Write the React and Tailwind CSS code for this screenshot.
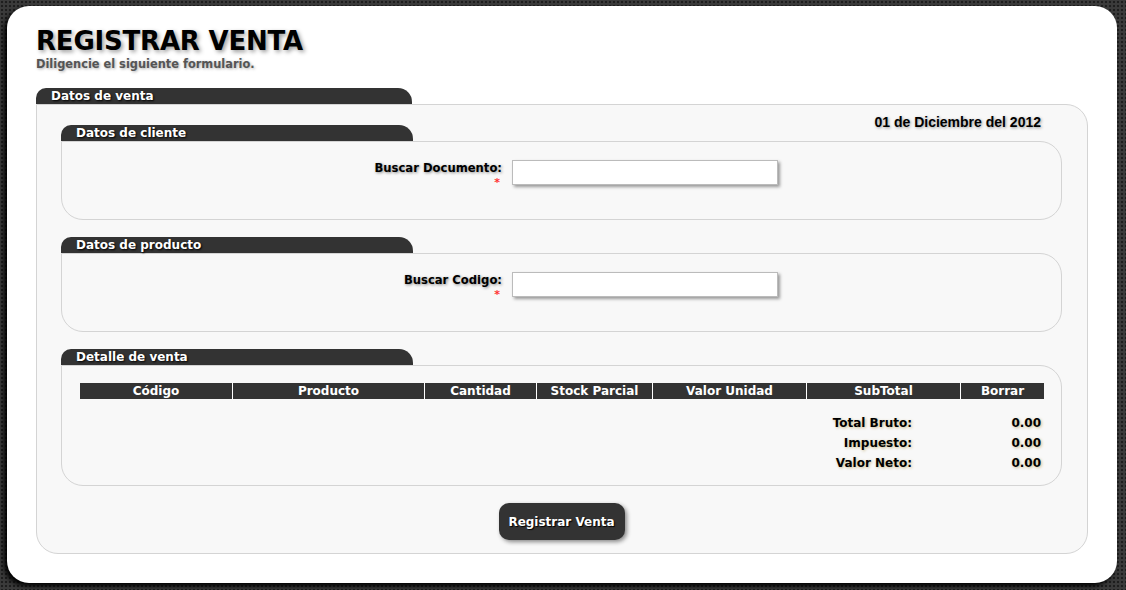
import React from 'react';

const font = { fontFamily: '"DejaVu Sans", Verdana, sans-serif' };

// Dark tab above each fieldset
const Tab = ({ title, w = 'w-[352px]' }) => (
  <div className={`${w} h-[16px] bg-[#333] rounded-tl-[10px] rounded-tr-[14px] pl-[15px] text-white text-[12px] font-bold leading-[17px] [text-shadow:1px_1px_2px_#000]`}>
    {title}
  </div>
);

const Field = ({ label }) => (
  <div className="flex pt-[18px]">
    <div className="w-[440px] text-right leading-[14px]">
      <div className="text-[11.6px] font-bold text-black pt-[1px] [text-shadow:1px_1px_3px_#888]">{label}</div>
      <div className="text-[11px] font-bold text-[#f33] pr-[2px] pt-[1px]">*</div>
    </div>
    <input
      type="text"
      className="ml-[10px] w-[266px] h-[25px] bg-white border border-[#bbb] shadow-[2px_2px_3px_#999] outline-none"
    />
  </div>
);

const Section = ({ title, children, className = '' }) => (
  <div>
    <Tab title={title} />
    <div className={`bg-[#f8f8f8] border border-[#d4d4d4] rounded-tr-[22px] rounded-b-[22px] ${className}`}>
      {children}
    </div>
  </div>
);

const columns = [
  { label: 'Código', w: 'w-[152px]' },
  { label: 'Producto', w: 'w-[192px]' },
  { label: 'Cantidad', w: 'w-[112px]' },
  { label: 'Stock Parcial', w: 'w-[116px]' },
  { label: 'Valor Unidad', w: 'w-[154px]' },
  { label: 'SubTotal', w: 'w-[154px]' },
  { label: 'Borrar', w: 'w-[84px]' },
];

const totals = [
  { label: 'Total Bruto:', value: '0.00' },
  { label: 'Impuesto:', value: '0.00' },
  { label: 'Valor Neto:', value: '0.00' },
];

export default function App() {
  return (
    <div
      className="w-[1126px] h-[590px] bg-[#3b3b3b] [background-image:radial-gradient(#1e1e1e_1px,transparent_1.6px)] [background-size:4px_4px] pt-[6px] pl-[7px] pr-[9px] pb-[7px]"
      style={font}
    >
      <div className="h-full bg-white rounded-[22px] shadow-[-3px_3px_5px_#000] px-[29px] pt-[19px]">
        {/* Header */}
        <h1 className="text-[26px] tracking-[-0.2px] font-bold leading-[32px] text-black [text-shadow:2px_2px_4px_#999]">REGISTRAR VENTA</h1>
        <p className="text-[11.4px] font-bold leading-[14px] text-[#555] [text-shadow:1px_1px_3px_#aaa]">
          Diligencie el siguiente formulario.
        </p>

        {/* Datos de venta */}
        <div className="mt-[17px]">
          <Tab title="Datos de venta" w="w-[376px]" />
          <div className="bg-[#f8f8f8] border border-[#d4d4d4] rounded-tr-[22px] rounded-b-[22px] h-[450px] pt-[10px] pl-[24px] pr-[25px]">
            <div
              className="h-[10px] text-right pr-[21px] text-[14px] font-bold leading-[15px] text-black [text-shadow:1px_1px_3px_#999]"
              style={{ fontFamily: '"Liberation Sans", Arial, sans-serif' }}
            >
              01 de Diciembre del 2012
            </div>

            <div className="flex flex-col gap-[17px]">
              <Section title="Datos de cliente" className="h-[79px]">
                <Field label="Buscar Documento:" />
              </Section>

              <Section title="Datos de producto" className="h-[79px]">
                <Field label="Buscar Codigo:" />
              </Section>

              <Section title="Detalle de venta" className="h-[121px] pt-[17px] pl-[18px] pr-[17px]">
                <div className="flex h-[16px] bg-[#333]">
                  {columns.map((c, i) => (
                    <div
                      key={c.label}
                      className={`${c.w} ${i > 0 ? 'border-l border-white' : ''} text-center text-white text-[12px] font-bold leading-[16px]`}
                    >
                      {c.label}
                    </div>
                  ))}
                </div>
                <div className="mt-[14px] flex flex-col">
                  {totals.map((t) => (
                    <div key={t.label} className="flex justify-end h-[20px] items-center text-[12px] font-bold text-black [text-shadow:1px_1px_3px_#c9b98a]">
                      <div className="text-right">{t.label}</div>
                      <div className="w-[132px] text-right pr-[3px]">{t.value}</div>
                    </div>
                  ))}
                </div>
              </Section>
            </div>

            <div className="flex justify-center mt-[17px]">
              <button className="w-[126px] h-[37px] bg-[#333] rounded-[10px] text-white text-[12px] font-bold shadow-[2px_2px_4px_#888] [text-shadow:1px_1px_1px_#000]">
                Registrar Venta
              </button>
            </div>
          </div>
        </div>
      </div>
    </div>
  );
}
